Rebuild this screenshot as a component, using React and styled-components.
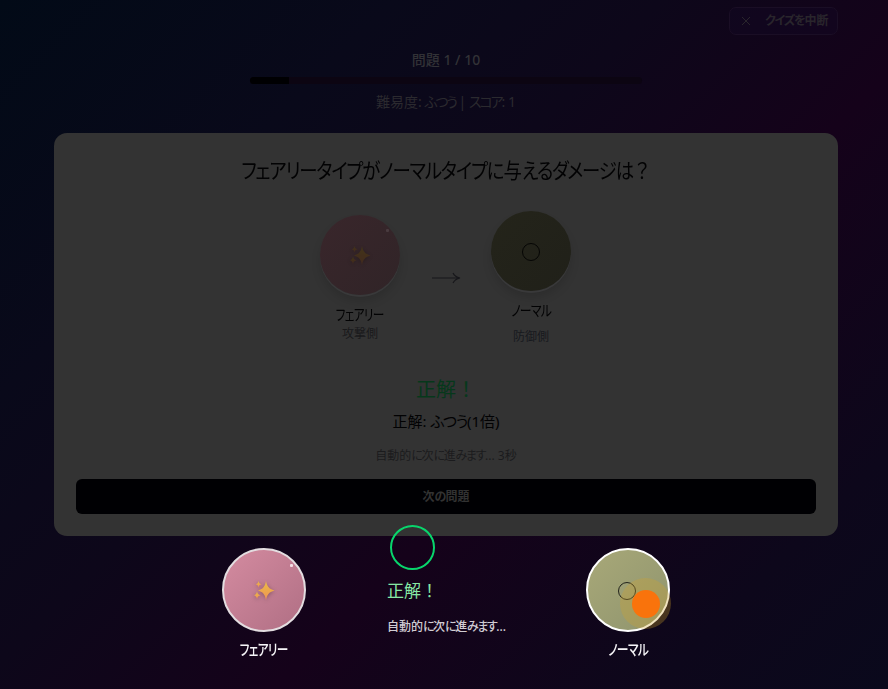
import React from "react";
import styled, { createGlobalStyle, css } from "styled-components";

const GlobalStyle = createGlobalStyle`
  * { box-sizing: border-box; }
  html, body { margin: 0; background: #0b0818; overflow: hidden; }
  body { font-family: "Noto Sans", "Noto Sans CJK JP", sans-serif; }
  button { font: inherit; margin: 0; }
`;

const KanaRun = styled.span`
  font-feature-settings: "palt";
  letter-spacing: ${({ $gap }) => $gap}em;
`;

/* Sets runs of kana tighter than the kanji around them. */
function Kana({ children, gap = -0.06 }) {
  return String(children)
    .split(/([ぁ-ヶー]+)/)
    .map((part, i) => (i % 2 ? <KanaRun key={i} $gap={gap}>{part}</KanaRun> : part));
}

/* Narrow setting for headings and type names. */
const Condensed = styled.span`
  display: inline-block;
  transform: scaleX(${({ $ratio }) => $ratio});
`;

const Page = styled.div`
  width: 888px;
  height: 689px;
  padding: 7px 50px 0 54px;
  display: flex;
  flex-direction: column;
  overflow: hidden;
  background: linear-gradient(135deg, #020a17 0%, #09091a 25%, #0d071a 42%, #15021a 61%, #0d071b 85%, #0a091c 100%);
`;

const TopBar = styled.header`
  display: flex;
  justify-content: flex-end;
  height: 28px;
`;

const QuitButton = styled.button`
  width: 109px;
  height: 28px;
  display: flex;
  align-items: center;
  padding: 0 10px 0 12px;
  gap: 15px;
  color: #29252c;
  background: rgba(20, 10, 40, 0.3);
  border: 1px solid #1a0e25;
  border-radius: 7px;
  font-size: 12px;
  font-weight: 700;
  line-height: 20px;
  white-space: nowrap;
`;

const Progress = styled.section`
  display: flex;
  flex-direction: column;
  align-items: center;
  height: 98px;
  padding-top: 14px;
`;

const ProgressText = styled.div`
  height: 22px;
  line-height: 22px;
  font-size: 14px;
  font-weight: ${({ $strong }) => ($strong ? 500 : 400)};
  color: ${({ $strong }) => ($strong ? "#323236" : "#2b2a2f")};
  word-spacing: ${({ $strong }) => ($strong ? 0 : -1)}px;
  white-space: nowrap;
`;

const Track = styled.div`
  width: 392px;
  height: 7px;
  margin: 6px 0 7px;
  border-radius: 4px;
  background: #0c0512;
  overflow: hidden;
`;

const Fill = styled.div`
  width: 10%;
  height: 100%;
  background: #000002;
`;

const Card = styled.main`
  width: 784px;
  height: 403px;
  flex: none;
  padding: 0 22px;
  display: flex;
  flex-direction: column;
  align-items: center;
  background: #333333;
  border-radius: 13px;
`;

const Question = styled.h1`
  margin: 21px 0 0;
  height: 33px;
  line-height: 33px;
  font-size: 21px;
  font-weight: 400;
  color: #020203;
  white-space: nowrap;
`;

const Matchup = styled.div`
  display: flex;
  justify-content: center;
  height: 187px;
  padding: 24px 1px 0 0;
`;

const Side = styled.div`
  width: 80px;
  display: flex;
  flex-direction: column;
  align-items: center;
  padding-top: ${({ $drop }) => ($drop ? 4 : 0)}px;
`;

const Orb = styled.div`
  position: relative;
  width: ${({ $lit }) => ($lit ? 84 : 80)}px;
  height: ${({ $lit }) => ($lit ? 84 : 80)}px;
  flex: none;
  border-radius: 50%;
  display: flex;
  align-items: center;
  justify-content: center;
  ${({ $lit, $kind }) =>
    $lit
      ? css`
          border: 2px solid ${$kind === "fairy" ? "#e3dde0" : "#ffffff"};
          background: ${$kind === "fairy"
            ? "linear-gradient(135deg, #d48ba0, #b06f84)"
            : "linear-gradient(135deg, #a8a878, #8f946e)"};
        `
      : css`
          background: ${$kind === "fairy"
            ? "linear-gradient(135deg, #39262b, #302427)"
            : "linear-gradient(135deg, #24241a, #202019)"};
          box-shadow: 0 2px 0 #39393a, 0 7px 10px rgba(0, 0, 0, 0.13);
        `}
`;

const Glint = styled.i`
  position: absolute;
  top: 14px;
  right: 11px;
  width: 3px;
  height: 3px;
  border-radius: 1px;
  background: ${({ $lit }) => ($lit ? "#f4dfe6" : "#493b3f")};
`;

const SparkleIcon = styled.svg`
  width: 22px;
  height: 22px;
  margin-top: 2px;
  opacity: ${({ $lit }) => ($lit ? 1 : 0.75)};
  filter: ${({ $lit }) => ($lit ? "" : "brightness(0.3)")} drop-shadow(0 1px 2px rgba(0, 0, 0, 0.3));
`;

const Ring = styled.span`
  width: 18px;
  height: 18px;
  margin: 2px ${({ $lit }) => ($lit ? 2 : 0)}px 0 0;
  border: 1px solid ${({ $lit }) => ($lit ? "#22231b" : "#050504")};
  border-radius: 50%;
`;

function Sparkles({ lit }) {
  return (
    <SparkleIcon viewBox="0 0 22 22" $lit={lit}>
      <defs>
        <linearGradient id="gold" x1="0" y1="0" x2="0" y2="1">
          <stop offset="0" stopColor="#e9bd43" />
          <stop offset="1" stopColor="#f09356" />
        </linearGradient>
      </defs>
      <g fill="url(#gold)">
        <path d="M13 1C14 6 15.800 9 21.500 10.500C15.800 12 14 15 13 20C12 15 10.500 12 5 10.500C10.500 9 12 6 13 1Z" />
        <path d="M5.500 1C5.900 3 6.500 3.800 8.500 4.200C6.500 4.700 5.900 5.500 5.500 7.500C5.100 5.500 4.500 4.700 2.800 4.200C4.500 3.800 5.100 3 5.500 1Z" />
        <path d="M4 11.500C4.500 13.700 5.200 14.600 7.500 15.200C5.200 15.800 4.500 16.700 4 19C3.500 16.700 2.800 15.800 1 15.200C2.800 14.600 3.500 13.700 4 11.500Z" />
      </g>
    </SparkleIcon>
  );
}

function TypeOrb({ kind, lit }) {
  return (
    <Orb $kind={kind} $lit={lit}>
      {kind === "fairy" ? <Sparkles lit={lit} /> : <Ring $lit={lit} />}
      {kind === "fairy" && <Glint $lit={lit} />}
    </Orb>
  );
}

const TypeName = styled.div`
  margin-top: 8px;
  height: 22px;
  line-height: 22px;
  font-size: 15px;
  color: #020203;
  white-space: nowrap;
`;

const Role = styled.div`
  margin-top: ${({ $drop }) => ($drop ? -1 : 6)}px;
  height: 20px;
  line-height: 20px;
  font-size: 12px;
  color: ${({ $drop }) => ($drop ? "#19191b" : "#17191e")};
`;

const Arrow = styled.svg`
  width: 30px;
  height: 12px;
  margin: 61px 30px 0 31px;
  fill: none;
  stroke: #17171b;
  stroke-width: 1.2;
`;

const Verdict = styled.div`
  height: 32px;
  line-height: 32px;
  font-size: 20px;
  color: #06381b;
`;

const Answer = styled.div`
  height: 24px;
  line-height: 24px;
  margin-top: 3px;
  font-size: 15px;
  color: #020203;
  white-space: nowrap;
`;

const Countdown = styled.div`
  height: 20px;
  line-height: 20px;
  margin-top: 13px;
  font-size: 12px;
  color: #1b1b1d;
  white-space: nowrap;
`;

const NextButton = styled.button`
  width: 740px;
  height: 35px;
  margin-top: 13px;
  padding: 0 0 1px;
  flex: none;
  border: 0;
  border-radius: 6px;
  background: #000003;
  color: #323232;
  font-size: 12px;
  font-weight: 700;
`;

/* The result strip slides over the lower edge of the card. */
const ResultOverlay = styled.section`
  position: absolute;
  left: 222px;
  top: 525px;
  width: 449px;
  height: 140px;
  display: flex;
  align-items: flex-start;
`;

const Fighter = styled.div`
  width: 84px;
  margin-top: 23px;
  display: flex;
  flex-direction: column;
  align-items: center;
  position: relative;
`;

const FighterName = styled.div`
  margin-top: 6px;
  height: 22px;
  line-height: 22px;
  font-size: 15px;
  font-weight: 500;
  color: #f5f4f7;
  white-space: nowrap;
`;

const Outcome = styled.div`
  width: 199px;
  margin: 0 0 0 81px;
`;

const HitRing = styled.div`
  width: 45px;
  height: 45px;
  margin-left: 3px;
  border: 2px solid #08d66c;
  border-radius: 50%;
`;

const OutcomeTitle = styled.div`
  margin-top: 8px;
  height: 26px;
  line-height: 26px;
  font-size: 17px;
  color: #86e8a4;
`;

const OutcomeNote = styled.div`
  margin-top: 13px;
  height: 20px;
  line-height: 20px;
  font-size: 12px;
  font-weight: 500;
  color: #d0ccd3;
  white-space: nowrap;
`;

const Impact = styled.span`
  position: absolute;
  left: 34px;
  top: 30px;
  width: 51px;
  height: 51px;
  border-radius: 50%;
  background: rgba(208, 162, 42, 0.3);
  display: flex;
  align-items: center;
  justify-content: center;

  &::after {
    content: "";
    width: 28px;
    height: 28px;
    border-radius: 50%;
    background: #f9730c;
  }
`;

const CloseIcon = styled.svg`
  width: 8px;
  height: 8px;
  flex: none;
  stroke: currentColor;
  stroke-width: 1;
`;

export default function App() {
  return (
    <>
      <GlobalStyle />
      <Page>
        <TopBar>
          <QuitButton>
            <CloseIcon viewBox="0 0 8 8"><path d="M0 0L8 8M8 0L0 8" /></CloseIcon>
            <span><Kana gap={-0.1}>クイズを中断</Kana></span>
          </QuitButton>
        </TopBar>
        <Progress>
          <ProgressText $strong>問題 1 / 10</ProgressText>
          <Track><Fill /></Track>
          <ProgressText><Kana gap={-0.15}>難易度: ふつう | スコア: 1</Kana></ProgressText>
        </Progress>
        <Card>
          <Question>
            <Condensed $ratio={0.875}><Kana>フェアリータイプがノーマルタイプに与えるダメージは？</Kana></Condensed>
          </Question>
          <Matchup>
            <Side $drop>
              <TypeOrb kind="fairy" />
              <TypeName><Condensed $ratio={0.78}><Kana>フェアリー</Kana></Condensed></TypeName>
              <Role $drop>攻撃側</Role>
            </Side>
            <Arrow viewBox="0 0 30 12"><path d="M1 6H28M22 1Q24 5 29 6Q24 7 22 11" /></Arrow>
            <Side>
              <TypeOrb kind="normal" />
              <TypeName><Condensed $ratio={0.79}><Kana>ノーマル</Kana></Condensed></TypeName>
              <Role>防御側</Role>
            </Side>
          </Matchup>
          <Verdict>正解！</Verdict>
          <Answer><Kana gap={-0.09}>正解: ふつう(1倍)</Kana></Answer>
          <Countdown><Kana gap={-0.12}>自動的に次に進みます... 3秒</Kana></Countdown>
          <NextButton><Kana>次の問題</Kana></NextButton>
        </Card>
      </Page>
      <ResultOverlay>
        <Fighter>
          <TypeOrb kind="fairy" lit />
          <FighterName><Condensed $ratio={0.78}><Kana>フェアリー</Kana></Condensed></FighterName>
        </Fighter>
        <Outcome>
          <HitRing />
          <OutcomeTitle>正解！</OutcomeTitle>
          <OutcomeNote><Kana gap={-0.125}>自動的に次に進みます...</Kana></OutcomeNote>
        </Outcome>
        <Fighter>
          <TypeOrb kind="normal" lit />
          <FighterName><Condensed $ratio={0.79}><Kana>ノーマル</Kana></Condensed></FighterName>
          <Impact />
        </Fighter>
      </ResultOverlay>
    </>
  );
}
